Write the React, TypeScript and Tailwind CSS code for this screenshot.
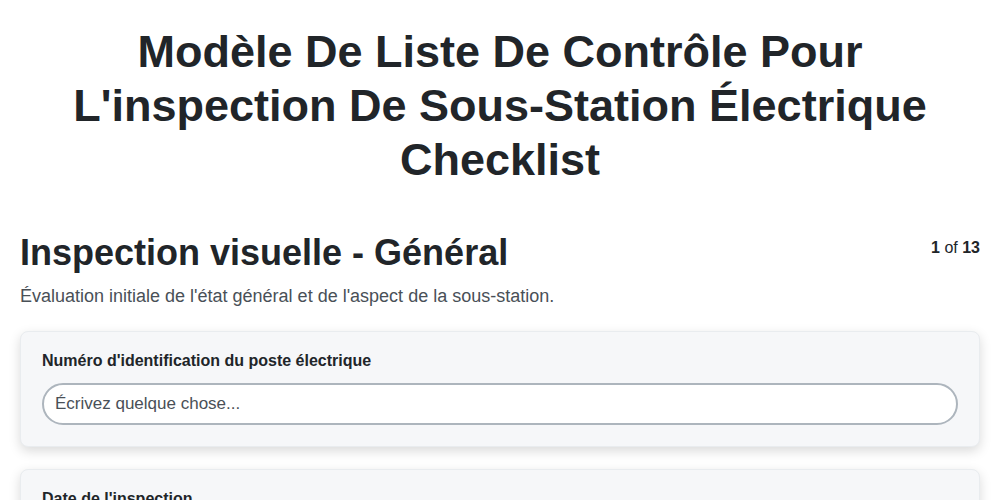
export default function App() {
  return (
    <div className="min-h-screen bg-white px-5 pt-[25px] font-['Liberation_Sans',Arial,sans-serif] text-[#212529]">
      <h1 className="mx-auto max-w-[900px] text-center text-[45px] font-bold leading-[54px]">
        Modèle De Liste De Contrôle Pour L'inspection De Sous-Station Électrique Checklist
      </h1>

      <div className="mt-[46px] flex items-start justify-between">
        <h2 className="text-[36px] font-semibold leading-[40px]">Inspection visuelle - Général</h2>
        <div className="pt-[3px] text-base">
          <span className="font-bold">1</span> of <span className="font-bold">13</span>
        </div>
      </div>
      <p className="mt-[10px] text-[18px] leading-[27px] text-[#495057]">
        Évaluation initiale de l'état général et de l'aspect de la sous-station.
      </p>

      <div className="mt-[21px] flex flex-col gap-[22px]">
        <div className="rounded-lg border border-[#e9ecef] bg-[#f6f7f9] px-[21px] pt-[19px] pb-[21px] shadow-[0_4px_12px_rgba(0,0,0,0.15)]">
          <label className="block text-base font-bold leading-5">Numéro d'identification du poste électrique</label>
          <input
            type="text"
            placeholder="Écrivez quelque chose..."
            className="mt-3 h-[42px] w-full rounded-full border-2 border-[#adb5bd] bg-white px-[11px] text-[17px] text-[#212529] placeholder:text-[#495057] outline-none"
          />
        </div>
        <div className="rounded-lg border border-[#e9ecef] bg-[#f6f7f9] px-[21px] pt-[19px] pb-[21px] shadow-[0_4px_12px_rgba(0,0,0,0.15)]">
          <label className="block text-base font-bold leading-5">Date de l'inspection</label>
          <input
            type="date"
            className="mt-3 h-[42px] w-full rounded-full border-2 border-[#adb5bd] bg-white px-[11px] text-[17px] outline-none"
          />
        </div>
      </div>
    </div>
  )
}
